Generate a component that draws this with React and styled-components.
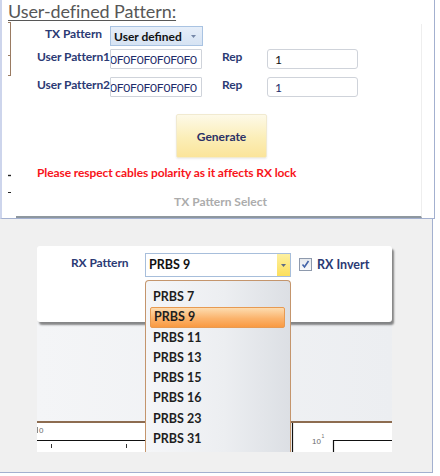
import styled, { createGlobalStyle } from "styled-components";

const GlobalStyle = createGlobalStyle`
  html, body {
    margin: 0;
    padding: 0;
    background: #ffffff;
  }
  body {
    font-family: Lato, "Open Sans", sans-serif;
  }
`;

const Page = styled.div`
  width: 440px;
  height: 476px;
  overflow: hidden;
  display: flex;
  flex-direction: column;
`;

/* ---------- TX part ---------- */

const TxSection = styled.section`
  width: 432px;
  height: 218px;
  border-left: 2px solid #cdd5ec;
  border-right: 1px solid #a3b0cf;
  border-bottom: 1px solid #a3b0cf;
  background: #ffffff;
  display: flex;
  flex-direction: column;
`;

const Title = styled.h2`
  margin: 0;
  padding-left: 6px;
  height: 22px;
  font-size: 18px;
  font-weight: 400;
  line-height: 22px;
  color: #575757;
  text-decoration: underline;
  text-decoration-thickness: 1px;
  text-underline-offset: 2px;
  letter-spacing: -0.1px;
`;

const TxBody = styled.div`
  flex: 1;
  display: flex;
`;

const Rail = styled.svg`
  width: 14px;
  height: 196px;
  flex: none;
`;

const TxPanel = styled.div`
  width: 406px;
  margin-top: 2px;
  border-right: 1px solid #eeeeee;
  border-bottom: 2px solid #8e979f;
  display: flex;
  flex-direction: column;
  padding-left: 21px;
  box-sizing: border-box;
`;

const FormRow = styled.div`
  display: grid;
  grid-template-columns: 73px 92px 20px 45px 91px;
  height: 20px;
  margin-top: ${(p) => p.$top}px;
`;

const Label = styled.span`
  align-self: start;
  text-align: center;
  font-size: 12px;
  font-weight: 700;
  line-height: 15px;
  color: #2b3a74;
  white-space: nowrap;
  letter-spacing: -0.1px;
`;

const RepLabel = styled(Label)`
  grid-column: 4;
  text-align: left;
`;

const Combo = styled.div`
  display: flex;
  align-items: center;
  justify-content: space-between;
  width: 93px;
  height: 20px;
  box-sizing: border-box;
  padding: 0 6px 0 3px;
  border: 1px solid #a9c3e2;
  background: linear-gradient(#e6eef9, #d6e3f3);
  font-size: 12px;
  font-weight: 700;
  color: #111111;
`;

const TextBox = styled.div`
  grid-column: ${(p) => p.$col};
  height: 20px;
  box-sizing: border-box;
  border: 1px solid #cfd3da;
  border-radius: ${(p) => (p.$round ? 3 : 1)}px;
  background: #ffffff;
  overflow: hidden;
  white-space: nowrap;
  display: flex;
  align-items: center;
  padding-left: ${(p) => p.$pad}px;
  font-size: 12px;
  color: ${(p) => p.$color || "#1d2c6b"};
`;

const Hex = styled.span`
  margin-left: -1px;
  letter-spacing: -0.2px;
`;

const GenerateButton = styled.button`
  margin: 17px 0 0 139px;
  width: 91px;
  height: 44px;
  border: 1px solid #f1ead0;
  border-radius: 2px;
  background: linear-gradient(#fdf9e8, #fbeeb7 55%, #fbe49a);
  box-shadow: 0 1px 2px rgba(0, 0, 0, 0.08);
  font-family: Lato, "Open Sans", sans-serif;
  font-size: 12px;
  font-weight: 700;
  color: #2b3166;
  cursor: pointer;
`;

const Warning = styled.p`
  margin: 8px 0 0 0;
  font-size: 12px;
  font-weight: 700;
  line-height: 14px;
  color: #f8141b;
  letter-spacing: -0.1px;
`;

const GroupCaption = styled.p`
  margin: 15px 0 0 0;
  padding-left: 137px;
  font-size: 12px;
  font-weight: 700;
  line-height: 14px;
  color: #acacac;
`;

/* ---------- RX part ---------- */

const RxSection = styled.section`
  position: relative;
  width: 433px;
  height: 254px;
  border-right: 1px solid #a3b0cf;
  border-bottom: 1px solid #a3b0cf;
  background: #f0f0f0;
  padding: 27px 0 0 37px;
  box-sizing: border-box;
`;

const Card = styled.div`
  width: 355px;
  height: 76px;
  box-sizing: border-box;
  background: #ffffff;
  border-radius: 3px;
  box-shadow: 2px 3px 2px rgba(0, 0, 0, 0.45);
  display: flex;
  align-items: flex-start;
  padding: 7px 0 0 34px;
  position: relative;
  z-index: 1;
`;

const RxLabel = styled(Label)`
  margin-top: 2px;
  width: 61px;
  margin-right: 13px;
  text-align: left;
`;

const RxCombo = styled.div`
  width: 146px;
  height: 24px;
  box-sizing: border-box;
  border: 1px solid #a7bedb;
  background: #ffffff;
  display: flex;
  align-items: stretch;
`;

const ComboText = styled.span`
  flex: 1;
  padding-left: 3px;
  font-size: 12.5px;
  font-weight: 700;
  line-height: 22px;
  color: #111111;
`;

const ArrowBox = styled.span`
  width: 13px;
  background: linear-gradient(#fdf0a0, #fcdf5c);
  display: flex;
  align-items: center;
  justify-content: center;
`;

const CheckWrap = styled.label`
  margin: 4px 0 0 8px;
  display: flex;
  align-items: center;
  gap: 5px;
  font-size: 12.5px;
  font-weight: 700;
  color: #2b3a74;
`;

const CheckBox = styled.span`
  width: 13px;
  height: 13px;
  box-sizing: border-box;
  border: 1px solid #8e9aad;
  background: linear-gradient(#e6e9ee, #f8f9fb);
  display: flex;
  align-items: center;
  justify-content: center;
`;

const ChartArea = styled.div`
  width: 355px;
  height: 130px;
  background: linear-gradient(to right, #f4f5f7, #eceef1);
  display: flex;
  flex-direction: column;
  justify-content: flex-end;
`;

const ChartStrip = styled.div`
  height: 29px;
  border-top: 2px solid #8d6c50;
  background: #ffffff;
`;

const ListPopup = styled.ul`
  position: absolute;
  left: 145px;
  top: 61px;
  width: 146px;
  height: 172px;
  box-sizing: border-box;
  margin: 0;
  padding: 6px 0 0 0;
  list-style: none;
  border: 1px solid #c4956c;
  border-bottom: none;
  border-radius: 4px 4px 0 0;
  background: linear-gradient(to right, #f5f6f8, #eceef1 55%, #dcdfe4);
  z-index: 2;
`;

const ListItem = styled.li`
  height: 20.3px;
  box-sizing: border-box;
  margin: 0 ${(p) => (p.$active ? "5px 0 4px" : "0 0 0")};
  padding-left: ${(p) => (p.$active ? 3 : 7)}px;
  font-size: 12.5px;
  font-weight: 700;
  color: #1e1e1e;
  border-radius: 2px;
  border: ${(p) => (p.$active ? "1px solid #e79a52" : "none")};
  line-height: ${(p) => (p.$active ? 18 : 20)}px;
  background: ${(p) =>
    p.$active ? "linear-gradient(#fddcb0, #fbb36c 55%, #f99a42)" : "transparent"};
`;

const prbs = ["PRBS 7", "PRBS 9", "PRBS 11", "PRBS 13", "PRBS 15", "PRBS 16", "PRBS 23", "PRBS 31"];

const App = () => (
  <>
    <GlobalStyle />
    <Page>
      <TxSection>
        <Title>User-defined Pattern:</Title>
        <TxBody>
          <Rail viewBox="0 0 14 196">
            <line x1="8.5" y1="0" x2="8.5" y2="53" stroke="#9a7b62" strokeWidth="1" />
            <line x1="6" y1="0.5" x2="9" y2="0.5" stroke="#9a7b62" />
            <line x1="6" y1="33.5" x2="9" y2="33.5" stroke="#9a7b62" />
            <line x1="6" y1="53.5" x2="9" y2="53.5" stroke="#9a7b62" />
            <line x1="6" y1="153.5" x2="9" y2="153.5" stroke="#222" strokeWidth="1.4" />
            <line x1="6" y1="170.5" x2="9" y2="170.5" stroke="#222" strokeWidth="1" />
          </Rail>
          <TxPanel>
            <FormRow $top={2}>
              <Label>TX Pattern</Label>
              <Combo>
                User defined
                <svg width="5" height="3" viewBox="0 0 5 3">
                  <path d="M0 0h5L2.5 3z" fill="#7587a8" />
                </svg>
              </Combo>
            </FormRow>
            <FormRow $top={3}>
              <Label>User Pattern1</Label>
              <TextBox $col={2} $pad={0}>
                <Hex>0F0F0F0F0F0F0</Hex>
              </TextBox>
              <RepLabel>Rep</RepLabel>
              <TextBox $col={5} $pad={7} $round $color="#111">
                1
              </TextBox>
            </FormRow>
            <FormRow $top={8}>
              <Label>User Pattern2</Label>
              <TextBox $col={2} $pad={0}>
                <Hex>0F0F0F0F0F0F0</Hex>
              </TextBox>
              <RepLabel>Rep</RepLabel>
              <TextBox $col={5} $pad={7} $round>
                1
              </TextBox>
            </FormRow>
            <GenerateButton>Generate</GenerateButton>
            <Warning>Please respect cables polarity as it affects RX lock</Warning>
            <GroupCaption>TX Pattern Select</GroupCaption>
          </TxPanel>
        </TxBody>
      </TxSection>

      <RxSection>
        <Card>
          <RxLabel>RX Pattern</RxLabel>
          <RxCombo>
            <ComboText>PRBS 9</ComboText>
            <ArrowBox>
              <svg width="5" height="3" viewBox="0 0 5 3">
                <path d="M0 0h5L2.5 3z" fill="#5d6b86" />
              </svg>
            </ArrowBox>
          </RxCombo>
          <CheckWrap>
            <CheckBox>
              <svg width="9" height="9" viewBox="0 0 9 9">
                <path d="M1.5 4.5l2 2.5L7.5 1" fill="none" stroke="#4263a8" strokeWidth="1.6" />
              </svg>
            </CheckBox>
            RX Invert
          </CheckWrap>
        </Card>
        <ChartArea>
          <ChartStrip>
            <svg width="355" height="29" viewBox="0 0 355 29">
              <line x1="0.5" y1="4" x2="0.5" y2="10" stroke="#8a8a8a" strokeWidth="1" />
              <text x="2" y="10" fontSize="8" fill="#6b6b6b" fontFamily="Liberation Sans, sans-serif">
                0
              </text>
              <line x1="0" y1="17.5" x2="160" y2="17.5" stroke="#111" strokeWidth="1.2" />
              <line x1="14.5" y1="21" x2="14.5" y2="25" stroke="#333" />
              <line x1="89.5" y1="21" x2="89.5" y2="25" stroke="#333" />
              <line x1="255.5" y1="0" x2="255.5" y2="29" stroke="#111" strokeWidth="1.2" />
              <text x="275" y="21" fontSize="8" fill="#6b6b6b" fontFamily="Liberation Sans, sans-serif">
                10
              </text>
              <text x="284.5" y="15" fontSize="5" fill="#6b6b6b" fontFamily="Liberation Sans, sans-serif">
                1
              </text>
              <path d="M296.5 29V17.5H355" fill="none" stroke="#111" strokeWidth="1.2" />
            </svg>
          </ChartStrip>
        </ChartArea>
        <ListPopup>
          {prbs.map((p) => (
            <ListItem key={p} $active={p === "PRBS 9"}>
              {p}
            </ListItem>
          ))}
        </ListPopup>
      </RxSection>
    </Page>
  </>
);

export default App;
